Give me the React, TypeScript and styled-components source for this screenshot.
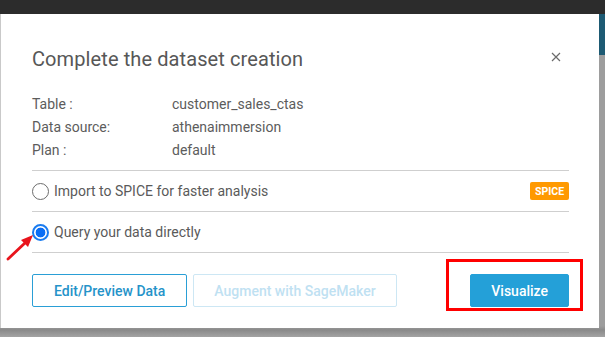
import styled, { createGlobalStyle } from "styled-components";

const GlobalStyle = createGlobalStyle`
  html, body {
    margin: 0;
    padding: 0;
    background: #9d9d9d;
    font-family: Roboto, "Liberation Sans", sans-serif;
    overflow: hidden;
  }
`

const info = [
  {label: "Table :", value: "customer_sales_ctas"},
  {label: "Data source:", value: "athenaimmersion"},
  {label: "Plan :", value: "default"},
]

const CloseIcon = () => (
  <svg width="10" height="10" viewBox="0 0 10 10">
    <path d="M1 1 L9 9 M9 1 L1 9" stroke="#6b6b6b" strokeWidth="1.2" fill="none"/>
  </svg>
)

const Arrow = () => (
  <svg width="32" height="34" viewBox="0 0 32 34">
    <path d="M3 31 L21 14" stroke="#e8141c" strokeWidth="2.8" strokeLinecap="round" fill="none"/>
    <path d="M28 7 L16 12 L23 19 Z" fill="#e8141c"/>
  </svg>
)

export default function App() {
  return (
    <>
      <GlobalStyle/>
      <TopBar/>
      <Stage>
        <Modal>
          <Header>
            <Title>Complete the dataset creation</Title>
            <CloseButton><CloseIcon/></CloseButton>
          </Header>

          <InfoList>
            {info.map(row => (
              <InfoRow key={row.label}>
                <span>{row.label}</span>
                <span>{row.value}</span>
              </InfoRow>
            ))}
          </InfoList>

          <Options>
            <Option>
              <Radio/>
              <OptionLabel>Import to SPICE for faster analysis</OptionLabel>
              <Badge>SPICE</Badge>
            </Option>
            <Option>
              <Radio $checked/>
              <OptionLabel>Query your data directly</OptionLabel>
            </Option>
          </Options>

          <Footer>
            <Button $variant="outline">Edit/Preview Data</Button>
            <Button $variant="disabled">Augment with SageMaker</Button>
            <Spacer/>
            <Button $variant="primary">Visualize</Button>
          </Footer>

          <Highlight/>
          <ArrowMark><Arrow/></ArrowMark>
        </Modal>
        <SideStrip>
          <SideTeal/>
        </SideStrip>
      </Stage>
    </>
  );
}

const TopBar = styled.div`
  height: 14px;
  background: #2c2c2c;
`
const Stage = styled.div`
  display: flex;
  align-items: flex-start;
  height: 323px;
  background: linear-gradient(#9d9d9d, #9d9d9d 312px, #8a8a8a 316px, #a3a3a3 323px);
`
const Modal = styled.div`
  position: relative;
  box-sizing: border-box;
  width: 599px;
  height: 314px;
  padding: 33px 30px 0 31px;
  background: #fff;
  border-left: 1px solid #c9c9c9;
  color: #5a5a5a;
`
const Header = styled.div`
  display: flex;
  align-items: center;
  justify-content: space-between;
  height: 24px;
`
const Title = styled.h1`
  margin: 0;
  font-size: 20px;
  font-weight: 400;
  line-height: 24px;
  letter-spacing: 0.1px;
  color: #575757;
`
const CloseButton = styled.div`
  display: flex;
  margin-right: 8px;
  margin-top: -4px;
`
const InfoList = styled.div`
  margin-top: 22px;
  display: flex;
  flex-direction: column;
`
const InfoRow = styled.div`
  display: grid;
  grid-template-columns: 140px 1fr;
  font-size: 14px;
  line-height: 23px;
  color: #5c5c5c;
`
const Options = styled.div`
  margin-top: 8px;
  border-top: 1px solid #cfcfcf;
`
const Option = styled.div`
  display: flex;
  align-items: center;
  gap: 5px;
  height: 40px;
  border-bottom: 1px solid #cfcfcf;
`
const Radio = styled.span<{ $checked?: boolean }>`
  box-sizing: border-box;
  width: 17px;
  height: 17px;
  border-radius: 50%;
  border: ${p => p.$checked ? "2px solid #1a7cf0" : "1px solid #6d6d6d"};
  background: ${p => p.$checked ? "radial-gradient(circle, #0a6ef5 0 4.6px, #fff 5.2px)" : "#fff"};
`
const OptionLabel = styled.span`
  flex: 1;
  font-size: 14px;
  color: #5a5a5a;
`
const Badge = styled.span`
  width: 39px;
  height: 18px;
  display: flex;
  align-items: center;
  justify-content: center;
  background: #ff9900;
  color: #fff;
  border-radius: 2px;
  font-size: 10.5px;
  font-weight: 700;
`
const Footer = styled.div`
  display: flex;
  align-items: center;
  gap: 6px;
  margin-top: 21px;
`
const Spacer = styled.div`
  flex: 1;
`
const variants = {
  outline: "background: #fff; color: #2593c9; border: 1px solid #2a9fd6; padding: 0 21px;",
  disabled: "background: #fff; color: #bfe1f2; border: 1px solid #cde7f4; padding: 0 20px;",
  primary: "background: #24a0d8; color: #fff; border: 1px solid #24a0d8; padding: 0 20px;",
}
const Button = styled.button<{ $variant: keyof typeof variants }>`
  box-sizing: border-box;
  height: 33px;
  border-radius: 2px;
  font-family: inherit;
  font-size: 14px;
  font-weight: 500;
  cursor: pointer;
  ${p => variants[p.$variant]}
`
const Highlight = styled.div`
  position: absolute;
  left: 445px;
  top: 245px;
  width: 137px;
  height: 52px;
  box-sizing: border-box;
  border: 3px solid #f00;
`
const ArrowMark = styled.div`
  position: absolute;
  left: 4px;
  top: 214px;
  display: flex;
`
const SideStrip = styled.div`
  flex: 1;
  align-self: stretch;
`
const SideTeal = styled.div`
  height: 41px;
  background: #1d5a73;
`
